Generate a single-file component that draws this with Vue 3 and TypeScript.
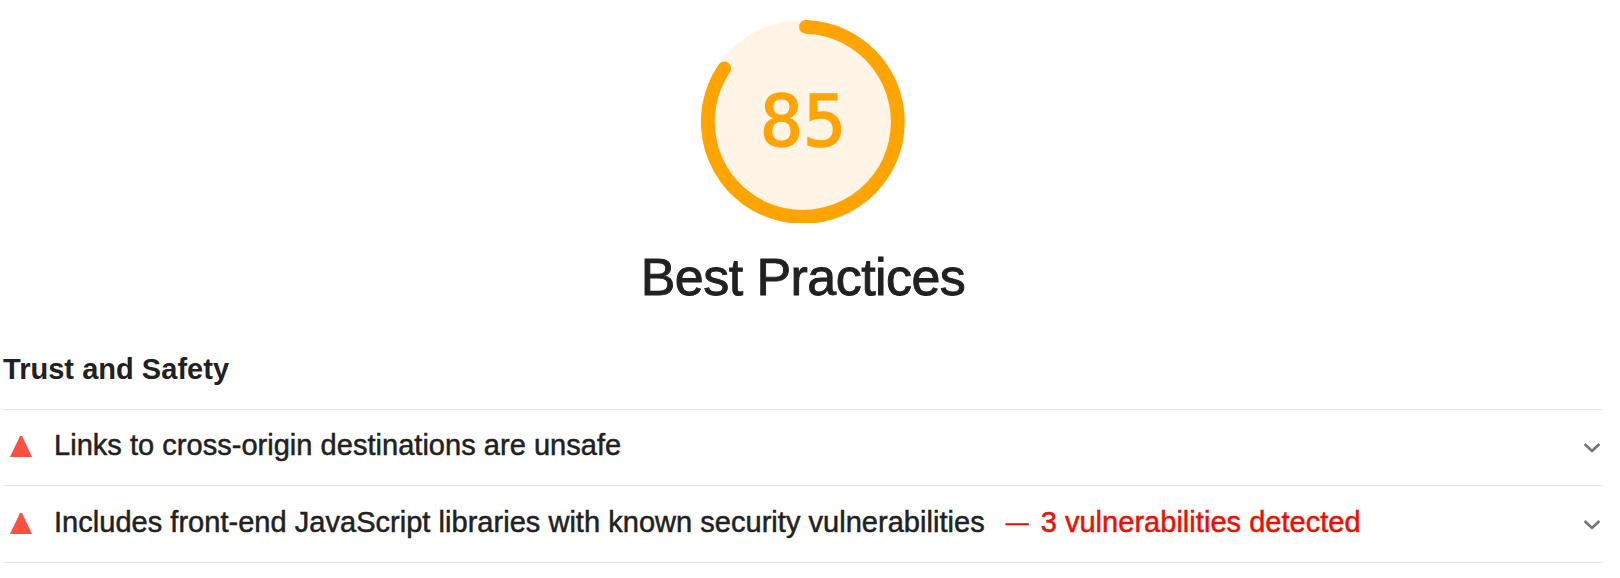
<script setup lang="ts">
interface Audit {
  title: string
  detail?: string
}

const score = 85
const audits: Audit[] = [
  { title: 'Links to cross-origin destinations are unsafe' },
  {
    title: 'Includes front-end JavaScript libraries with known security vulnerabilities',
    detail: '3 vulnerabilities detected',
  },
]
</script>

<template>
  <main class="report">
    <header class="category">
      <div class="gauge">
        <svg class="gauge-ring" viewBox="0 0 204 203" width="204" height="203">
          <circle cx="102" cy="102" r="102" fill="#fff4e5" />
          <path
            d="M105 6.9 A95 95 0 1 1 23.2 48.5"
            fill="none"
            stroke="#ffa400"
            stroke-width="13.8"
            stroke-linecap="round"
          />
        </svg>
        <span class="score">{{ score }}</span>
      </div>
      <h1 class="title">Best Practices</h1>
    </header>

    <section class="group">
      <h2 class="group-title">Trust and Safety</h2>
      <div v-for="audit in audits" :key="audit.title" class="audit">
        <svg class="marker" viewBox="0 0 22 21" width="22" height="21">
          <path d="M10 0 H12 L22 21 H0 Z" fill="#ff4e42" />
        </svg>
        <span class="audit-title">{{ audit.title }}</span>
        <span v-if="audit.detail" class="detail">
          <span class="dash">—</span>
          <span class="detail-text">{{ audit.detail }}</span>
        </span>
        <svg class="chevron" viewBox="0 0 18 12" width="18" height="12">
          <path d="M1.6 2 L9 9 L16.4 2" fill="none" stroke="#757575" stroke-width="2.6" />
        </svg>
      </div>
    </section>
  </main>
</template>

<style>
body {
  background: #fff;
}
</style>

<style scoped>
.report {
  box-sizing: border-box;
  height: 578px;
  padding: 20px 17px 0 3px;
  color: #212121;
  font-family: "Liberation Sans", Arial, sans-serif;
}
.category {
  display: flex;
  flex-direction: column;
  align-items: center;
  width: 1600px;
}
.gauge {
  display: grid;
  width: 204px;
  height: 203px;
}
.gauge-ring,
.score {
  grid-area: 1 / 1;
}
.score {
  place-self: center;
  padding-bottom: 2px;
  color: #ffa400;
  font: 72px/84px "DejaVu Sans Mono", monospace;
  -webkit-text-stroke: 1.4px #ffa400;
}
.title {
  margin: 24px 0 0;
  font-size: 52px;
  font-weight: 400;
  line-height: 60px;
  white-space: nowrap;
  letter-spacing: -0.55px;
  -webkit-text-stroke: 0.9px #212121;
}
.group-title {
  height: 34px;
  margin: 45px 0 0;
  padding-bottom: 23px;
  font-size: 29px;
  line-height: 34px;
  white-space: nowrap;
  letter-spacing: 0.03px;
}
.audit {
  display: flex;
  align-items: center;
  box-sizing: border-box;
  height: 76px;
  padding: 0 2px 2px 7px;
  border-top: 1px solid #e8e8e8;
  font-size: 29px;
  line-height: 34px;
  white-space: nowrap;
  letter-spacing: 0.03px;
  -webkit-text-stroke: 0.5px currentColor;
}
.audit:last-child {
  height: 78px;
  border-bottom: 1px solid #e8e8e8;
}
.audit-title {
  margin-left: 22px;
  padding-bottom: 3px;
}
.detail {
  display: flex;
  align-items: center;
  margin-left: 21px;
  padding-bottom: 3px;
  color: #eb0f00;
}
.dash {
  width: 35px;
  font-size: 23px;
}
.chevron {
  margin: 3px 0 0 auto;
}
</style>
